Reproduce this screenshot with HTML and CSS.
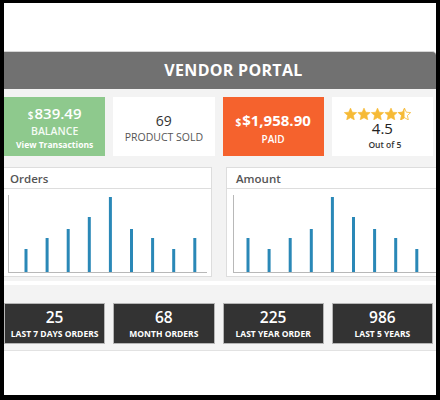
FILE: index.html
```html
<!DOCTYPE html>
<html lang="en">
<head>
    <meta charset="UTF-8">
    <meta name="viewport" content="width=device-width, initial-scale=1.0">
    <title>Vendor Portal</title>
    <link rel="stylesheet" href="styles.css">
</head>
<body>
<div class="frame">

    <header class="topbar">
        <h1>VENDOR PORTAL</h1>
    </header>

    <div class="panel">
        <div class="stats">
            <div class="stat stat-balance">
                <div class="stat-value"><span class="cur">$</span>839.49</div>
                <div class="stat-label">BALANCE</div>
                <a class="stat-link" href="#">View Transactions</a>
            </div>
            <div class="stat stat-plain">
                <div class="stat-value">69</div>
                <div class="stat-label">PRODUCT SOLD</div>
            </div>
            <div class="stat stat-paid">
                <div class="stat-value"><span class="cur">$</span>$1,958.90</div>
                <div class="stat-label">PAID</div>
            </div>
            <div class="stat stat-rating">
                <svg class="stars" width="68" height="12" viewBox="0 0 68 12">
                    <defs>
                        <polygon id="star" points="6.5,0.1 8.3,4.2 12.68,4.59 9.4,7.5 10.32,11.86 6.5,9.7 2.68,11.86 3.6,7.5 0.32,4.59 4.7,4.2" stroke-linejoin="round"/>
                        <clipPath id="half"><rect x="0" y="0" width="6.5" height="12"/></clipPath>
                    </defs>
                    <use href="#star" x="0"/>
                    <use href="#star" x="13.5"/>
                    <use href="#star" x="27"/>
                    <use href="#star" x="40.5"/>
                    <use href="#star" x="54" clip-path="url(#half)"/>
                    <use href="#star" x="54" class="star-outline"/>
                </svg>
                <div class="rating-value">4.5</div>
                <div class="rating-note">Out of 5</div>
            </div>
        </div>

        <div class="charts">
            <div class="chart-card">
                <div class="chart-title">Orders</div>
                <svg class="chart" width="100%" height="87">
                    <line class="axis" x1="7.5" y1="6" x2="7.5" y2="83"/>
                    <line class="axis" x1="7" y1="83.5" x2="206" y2="83.5"/>
                    <g class="bars">
                        <rect x="23.5" y="60" width="3" height="23"/>
                        <rect x="44.6" y="49" width="3" height="34"/>
                        <rect x="65.7" y="40" width="3" height="43"/>
                        <rect x="86.8" y="28" width="3" height="55"/>
                        <rect x="107.9" y="8" width="3" height="75"/>
                        <rect x="129" y="40" width="3" height="43"/>
                        <rect x="150.1" y="49" width="3" height="34"/>
                        <rect x="171.2" y="60" width="3" height="23"/>
                        <rect x="192.3" y="49" width="3" height="34"/>
                    </g>
                </svg>
            </div>
            <div class="chart-card">
                <div class="chart-title">Amount</div>
                <svg class="chart" width="100%" height="87">
                    <line class="axis" x1="6.5" y1="6" x2="6.5" y2="83"/>
                    <line class="axis" x1="6" y1="83.5" x2="212" y2="83.5"/>
                    <g class="bars">
                        <rect x="19.5" y="49" width="3" height="34"/>
                        <rect x="40.6" y="60" width="3" height="23"/>
                        <rect x="61.7" y="49" width="3" height="34"/>
                        <rect x="82.8" y="40" width="3" height="43"/>
                        <rect x="103.9" y="8" width="3" height="75"/>
                        <rect x="125" y="28" width="3" height="55"/>
                        <rect x="146.1" y="40" width="3" height="43"/>
                        <rect x="167.2" y="49" width="3" height="34"/>
                        <rect x="188.3" y="60" width="3" height="23"/>
                    </g>
                </svg>
            </div>
        </div>
    </div>

    <div class="totals">
        <div class="total">
            <div class="total-value">25</div>
            <div class="total-label">LAST 7 DAYS ORDERS</div>
        </div>
        <div class="total">
            <div class="total-value">68</div>
            <div class="total-label">MONTH ORDERS</div>
        </div>
        <div class="total">
            <div class="total-value">225</div>
            <div class="total-label">LAST YEAR ORDER</div>
        </div>
        <div class="total">
            <div class="total-value">986</div>
            <div class="total-label">LAST 5 YEARS</div>
        </div>
    </div>

</div>
</body>
</html>
```

FILE: styles.css
```css
body {
    font-family: "Open Sans", Arial, sans-serif;
    margin: 0;
    padding: 0;
    background-color: #000;
}
.frame {
    height: 400px;
    box-sizing: border-box;
    border-style: solid;
    border-color: #000;
    border-width: 3px 4px 5px 4px;
    background-color: #fff;
    overflow: hidden;
}

/* title bar */
.topbar {
    margin-top: 48px;
    border-top: 1px solid #d6d6d6;
    height: 37px;
    background-color: #717171;
    border-top-right-radius: 4px;
    padding-left: 27px;
}
.topbar h1 {
    margin: 0;
    line-height: 37px;
    text-align: center;
    color: #fff;
    font-size: 16px;
    font-weight: 700;
    letter-spacing: 0.3px;
}

/* grey body under the title bar */
.panel {
    background-color: #f3f3f3;
    padding: 8px 0 4px;
}
.stats {
    display: grid;
    grid-template-columns: repeat(4, 1fr);
    gap: 8px;
    padding-right: 3px;
}
.stat {
    height: 59px;
    display: flex;
    flex-direction: column;
    align-items: center;
    justify-content: center;
    text-align: center;
    box-sizing: border-box;
}
.stat-value {
    font-size: 15px;
    font-weight: 600;
    line-height: 18px;
}
.cur {
    font-size: 10px;
    margin-right: 1px;
}
.stat-label {
    font-size: 10px;
    line-height: 14px;
}
.stat-link {
    font-size: 8.5px;
    font-weight: 700;
    line-height: 13px;
    color: #fff;
    text-decoration: none;
}
.stat-balance {
    background-color: #8ec98d;
    color: #fff;
    padding-top: 1px;
}
.stat-balance .stat-label {
    font-weight: 600;
    color: #f4fbf4;
    font-size: 10.5px;
}
.stat-plain {
    background-color: #fff;
    color: #555;
    padding-top: 2px;
}
.stat-plain .stat-value {
    font-weight: 400;
    color: #333;
    font-size: 14px;
}
.stat-plain .stat-label {
    font-size: 10.5px;
}
.stat-paid {
    background-color: #f5622d;
    color: #fff;
    padding-top: 4px;
}
.stat-paid .stat-value {
    font-weight: 700;
}
.stat-paid .stat-label {
    font-weight: 600;
    margin-top: 1px;
}
.stat-rating {
    background-color: #fff;
    color: #222;
    padding-top: 2px;
}
.stars {
    fill: #f6ba36;
    stroke: #f6ba36;
    stroke-width: 0.6;
    margin: 4px 8px -2px 0;
}
.star-outline {
    fill: none;
    stroke-width: 0.8;
}
.rating-value {
    font-size: 15px;
    line-height: 21px;
}
.rating-note {
    font-size: 8.5px;
    line-height: 12px;
    font-weight: 600;
    color: #333;
    margin-left: 5px;
}

/* charts */
.charts {
    display: grid;
    grid-template-columns: 1fr 1fr;
    gap: 14px;
    margin: 11px -2px 0 -4px;
}
.chart-card {
    background-color: #fff;
    border: 1px solid #ddd;
}
.chart-title {
    height: 20px;
    line-height: 22px;
    border-bottom: 1px solid #ddd;
    padding-left: 9px;
    font-size: 11.5px;
    font-weight: 600;
    color: #555;
}
.chart {
    display: block;
}
.axis {
    stroke: #b8b8b8;
    stroke-width: 1;
}
.bars rect {
    fill: #2a88b7;
}

/* totals strip */
.totals {
    margin-top: 4px;
    background-color: #f3f3f3;
    border-bottom: 1px solid #e2e2e2;
    padding: 18px 3px 6px 0;
    display: grid;
    grid-template-columns: repeat(4, 1fr);
    gap: 8px;
}
.total {
    height: 41px;
    box-sizing: border-box;
    background-color: #333;
    border: 1px solid #b5b5b5;
    color: #fff;
    text-align: center;
    padding-top: 4px;
}
.total-value {
    font-size: 15.5px;
    font-weight: 600;
    line-height: 19px;
}
.total-label {
    font-size: 8.5px;
    font-weight: 700;
    line-height: 14px;
}
```
